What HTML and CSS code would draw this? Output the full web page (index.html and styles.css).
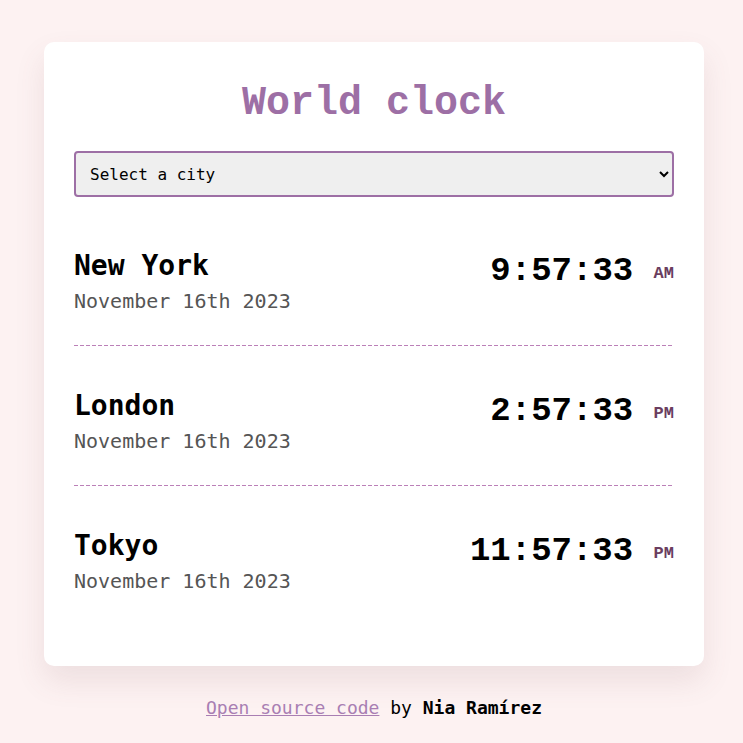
FILE: index.html
```html
<!DOCTYPE html>
<html lang="en">
<head>
<meta charset="utf-8">
<title>World clock</title>
<link rel="stylesheet" href="styles.css">
</head>
<body>
<div class="container">
  <h1 class="title">World clock</h1>
  <select class="city-select">
    <option>Select a city</option>
  </select>
  <div class="cities">
    <div class="city">
      <div class="city-info">
        <h2 class="city-name">New York</h2>
        <div class="city-date">November 16th 2023</div>
      </div>
      <div class="city-time">9:57:33 <small class="ampm">AM</small></div>
    </div>
    <div class="city">
      <div class="city-info">
        <h2 class="city-name">London</h2>
        <div class="city-date">November 16th 2023</div>
      </div>
      <div class="city-time">2:57:33 <small class="ampm">PM</small></div>
    </div>
    <div class="city">
      <div class="city-info">
        <h2 class="city-name">Tokyo</h2>
        <div class="city-date">November 16th 2023</div>
      </div>
      <div class="city-time">11:57:33 <small class="ampm">PM</small></div>
    </div>
  </div>
</div>
<footer class="footer">
  <a href="#" class="footer-link">Open source code</a> by <strong>Nia Ramírez</strong>
</footer>
</body>
</html>
```
FILE: styles.css
```css
html, body {
  margin: 0;
  padding: 0;
}
body {
  background: #fdf2f2;
  font-family: "DejaVu Sans Mono", "Liberation Mono", monospace;
  color: #000;
  padding-left: 5px;
}
.container {
  width: 600px;
  margin: 42px auto 0;
  background: #fff;
  border-radius: 10px;
  padding: 33px 30px 41px;
  box-shadow: 0 15px 30px rgba(120, 80, 90, 0.12);
}
.title {
  margin: 0 0 18px;
  text-align: center;
  font-family: "Liberation Mono", monospace;
  font-weight: 700;
  font-size: 40px;
  line-height: 58px;
  color: #9d6fa5;
}
.city-select {
  display: block;
  width: 600px;
  height: 46px;
  padding: 0 10px;
  border: 2px solid #9d6fa5;
  border-radius: 4px;
  background: #efefef;
  font-family: "DejaVu Sans Mono", monospace;
  font-size: 16px;
  color: #000;
}
.cities {
  margin-top: 9px;
}
.city {
  display: flex;
  justify-content: space-between;
  align-items: flex-start;
  padding: 30px 0 31px;
  height: 79px;
  background-image: repeating-linear-gradient(to right, #bb80b8 0 4px, transparent 4px 6px);
  background-size: 100% 1px;
  background-position: left bottom;
  background-repeat: no-repeat;
}
.city:last-child {
  background-image: none;
  padding-bottom: 30px;
}
.city-name {
  margin: 12px 0 0;
  font-family: "DejaVu Sans Mono", monospace;
  font-weight: 700;
  font-size: 28px;
  line-height: 36px;
}
.city-date {
  margin-top: 3px;
  font-size: 20px;
  line-height: 28px;
  color: #555;
}
.city-time {
  margin-top: 15px;
  font-family: "Liberation Mono", monospace;
  font-weight: 700;
  font-size: 34px;
  line-height: 40px;
}
.ampm {
  font-size: 17px;
  vertical-align: 2px;
  color: #6b3d5f;
}
.footer {
  margin-top: 30px;
  text-align: center;
  font-size: 18px;
  line-height: 24px;
}
.footer-link {
  color: #a97eb3;
}
.footer strong {
  font-weight: 700;
}
```
